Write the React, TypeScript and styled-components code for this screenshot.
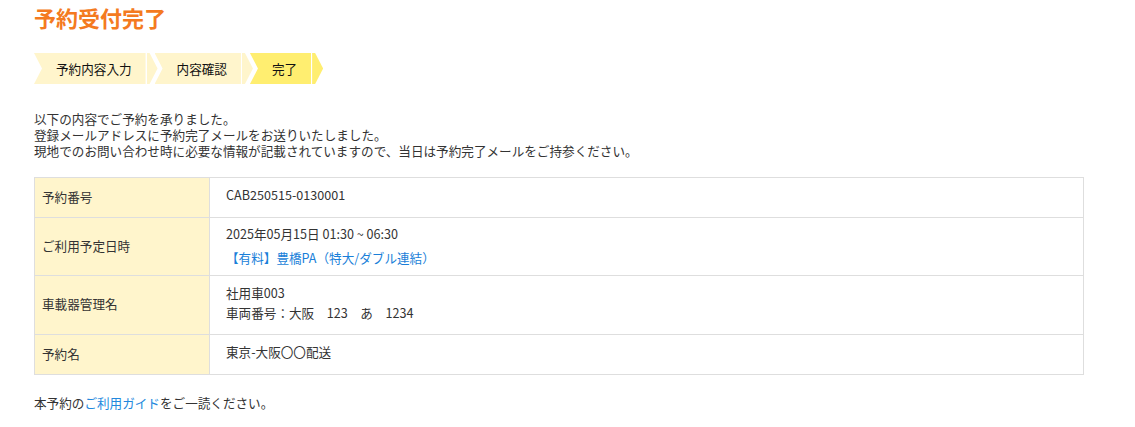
import React from "react";
import styled, { createGlobalStyle } from "styled-components";

const GlobalStyle = createGlobalStyle`
  body {
    margin: 0;
    background: #fff;
    color: #333;
    font-family: "Noto Sans CJK JP", "Noto Sans", sans-serif;
    font-size: 12.6px;
  }
`;

const steps = [
  { label: "予約内容入力", active: false },
  { label: "内容確認", active: false },
  { label: "完了", active: true },
];

const rows = [
  { head: "予約番号", kind: "single", lines: ["CAB250515-0130001"] },
  { head: "ご利用予定日時", kind: "date", lines: ["2025年05月15日 01:30 ~ 06:30"] },
  {
    head: "車載器管理名",
    kind: "multi",
    lines: ["社用車003", "車両番号：大阪　123　あ　1234"],
  },
  { head: "予約名", kind: "single", lines: ["東京-大阪〇〇配送"] },
];

const messages = [
  "以下の内容でご予約を承りました。",
  "登録メールアドレスに予約完了メールをお送りいたしました。",
  "現地でのお問い合わせ時に必要な情報が記載されていますので、当日は予約完了メールをご持参ください。",
];

const App = () => {
  return (
    <>
      <GlobalStyle />
      <Page>
        <Title>予約受付完了</Title>

        <StepBar>
          {steps.map((s) => (
            <Step key={s.label}>
              <StepBody active={s.active}>{s.label}</StepBody>
              <StepArrow active={s.active} />
            </Step>
          ))}
        </StepBar>

        <Message>
          {messages.map((m) => (
            <MessageLine key={m}>{m}</MessageLine>
          ))}
        </Message>

        <InfoTable>
          <tbody>
            {rows.map((r) => (
              <tr key={r.head}>
                <HeadCell>{r.head}</HeadCell>
                <DataCell kind={r.kind}>
                  {r.lines.map((l) => (
                    <Line key={l}>{l}</Line>
                  ))}
                  {r.kind === "date" && (
                    <PlaceLink href="#">【有料】豊橋PA（特大/ダブル連結）</PlaceLink>
                  )}
                </DataCell>
              </tr>
            ))}
          </tbody>
        </InfoTable>

        <Footer>
          本予約の<GuideLink href="#">ご利用ガイド</GuideLink>をご一読ください。
        </Footer>
      </Page>
    </>
  );
};

export default App;

const Page = styled.div`
  padding: 1px 51px 0 34px;
`;

const Title = styled.h1`
  margin: 0;
  font-size: 22px;
  line-height: 33px;
  font-weight: 700;
  color: #f47a20;
`;

const StepBar = styled.div`
  display: flex;
  margin-top: 19px;
`;

const Step = styled.div`
  display: flex;
  height: 31px;
  margin-right: -3px;
`;

const StepBody = styled.div<{ active: boolean }>`
  display: flex;
  align-items: center;
  padding: 0 14px 0 22px;
  margin-right: 1px;
  background: ${(p) => (p.active ? "#ffee70" : "#fff5cc")};
  color: #111;
  font-size: 12.6px;
  clip-path: polygon(0 0, 100% 0, 100% 100%, 0 100%, 8px 50%);
`;

const StepArrow = styled.div<{ active: boolean }>`
  width: 11px;
  background: ${(p) => (p.active ? "#ffee70" : "#fff5cc")};
  clip-path: polygon(0 0, 3px 0, 100% 50%, 3px 100%, 0 100%);
`;

const Message = styled.div`
  margin-top: 27px;
`;

const MessageLine = styled.p`
  margin: 0;
  height: 16px;
  line-height: 16px;
`;

const InfoTable = styled.table`
  margin-top: 18px;
  width: 100%;
  border-collapse: collapse;
  border: 1px solid #dedede;
`;

const HeadCell = styled.th`
  width: 160px;
  padding: 0 7px 3px;
  background: #fff5cc;
  border: 1px solid #dedede;
  text-align: left;
  font-weight: 400;
  vertical-align: middle;
`;

const DataCell = styled.td<{ kind: string }>`
  border: 1px solid #dedede;
  padding: ${(p) =>
    p.kind === "date" ? "7px 16px 8px" : p.kind === "multi" ? "7px 16px 11px" : "7px 16px 12px"};
  line-height: ${(p) => (p.kind === "date" ? "18px" : "20px")};
  vertical-align: middle;
`;

const Line = styled.div``;

const PlaceLink = styled.a`
  display: block;
  margin-top: 6px;
  color: #1a7fd9;
  text-decoration: none;
`;

const Footer = styled.p`
  margin: 20px 0 0;
  line-height: 16px;
`;

const GuideLink = styled.a`
  color: #2288dd;
  text-decoration: none;
`;
